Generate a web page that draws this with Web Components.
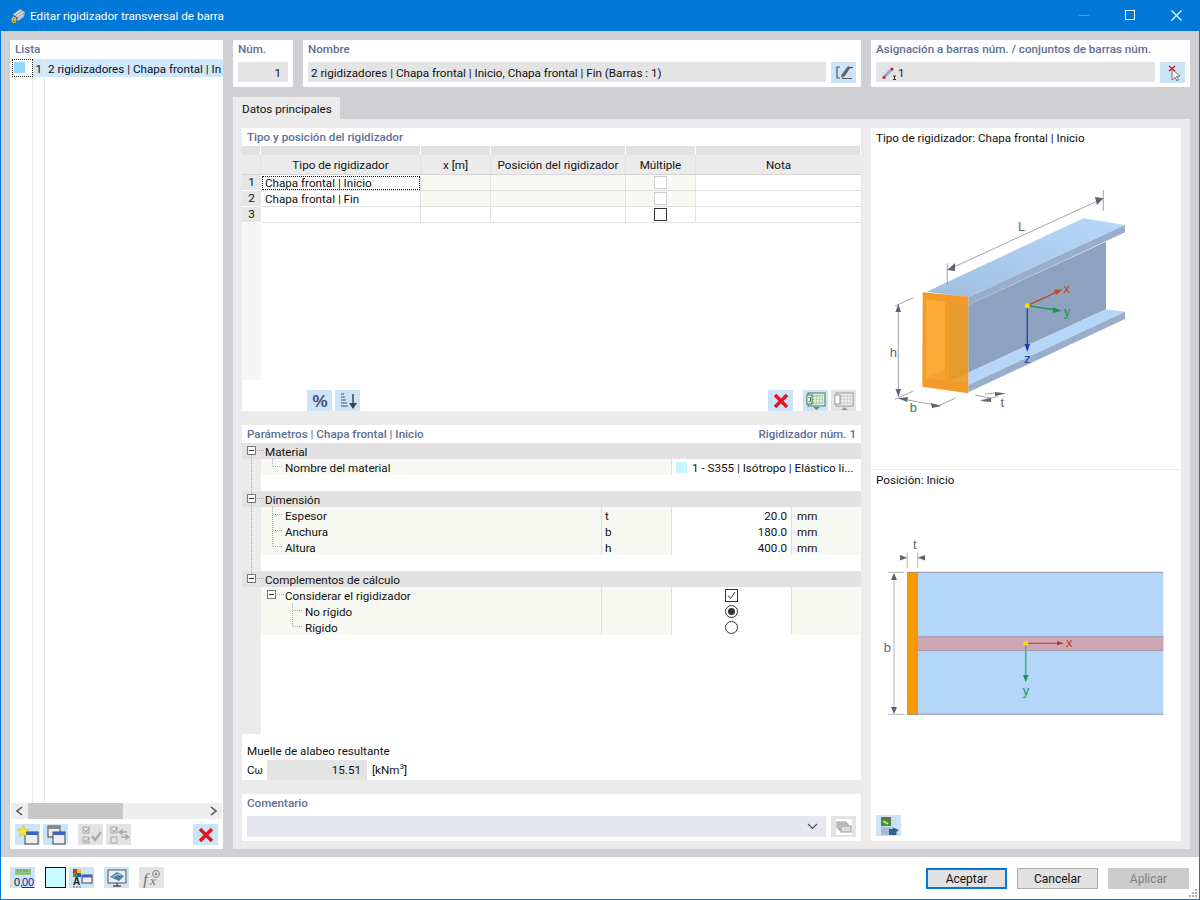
<!DOCTYPE html>
<html lang="es">
<head>
<meta charset="utf-8">
<title>Editar rigidizador transversal de barra</title>
<style>
  html, body { margin: 0; padding: 0; background: #fff; }
  body { width: 1200px; height: 900px; overflow: hidden; font: 11.65px Roboto, "Liberation Sans", sans-serif; color: #111; }
</style>
</head>
<body>
<rf-dialog>
  <rf-titlebar slot="title">Editar rigidizador transversal de barra</rf-titlebar>
  <rf-list slot="list"></rf-list>
  <rf-header slot="head"></rf-header>
  <rf-tab slot="tab">Datos principales</rf-tab>
  <rf-table slot="table"></rf-table>
  <rf-params slot="params"></rf-params>
  <rf-comment slot="comment"></rf-comment>
  <rf-preview slot="preview"></rf-preview>
  <rf-footer slot="footer"></rf-footer>
</rf-dialog>

<script>
// Iconos de la barra de herramientas (24x20)
const ICONOS = {
  editar: '<path d="M8 4H5v11h3M10 15.500h10" fill="none" stroke="#555" stroke-width="1.200"/><path d="M16 3l2.500 1.500-6 9-3 1.500 0-3.300z" fill="#666"/><path d="M17 4.500h4" stroke="#555" stroke-width="1.200"/>',
  cursor: '<path d="M11 6l0 11 3-2.500 2 3.500 1.500-1-2-3.500 3.500-.5z" fill="#eee" stroke="#777"/><path d="M8 3l6 5M14 3L8 8" stroke="#e01020" stroke-width="1.400"/>',
  porcentaje: '<text x="12" y="16" text-anchor="middle" font-family="Liberation Sans" font-weight="700" font-size="17" fill="#4a4a7a">%</text>',
  orden: '<path d="M5 3h3M5 6h4M5 9h5M5 12h6M5 15h7" stroke="#555"/><path d="M17 3v11" stroke="#444" stroke-width="1.500"/><path d="M13 12h8l-4 6z" fill="#444"/>',
  borrar: '<path d="M6 4l12 12M18 4L6 16" stroke="#e8141c" stroke-width="3.400"/>',
  excelIn: '<rect x="4" y="2" width="17" height="13" fill="#dfe8df" stroke="#4c7c55"/><rect x="8" y="4" width="11" height="9" fill="#9cc7a0"/><path d="M11 4v9M14 4v9M17 4v9M8 7h11M8 10h11" stroke="#fff" stroke-width=".8"/><rect x="3" y="4" width="5" height="9" fill="#fff" stroke="#3f7f4a"/><path d="M4.500 6.500h2v4h-2" stroke="#2b8a3e" fill="none"/><path d="M9 16h7l-3.500 3z" fill="#3aa655"/>',
  excelOut: '<rect x="4" y="2" width="17" height="13" fill="#efefef" stroke="#999"/><rect x="8" y="4" width="11" height="9" fill="#c8c8c8"/><path d="M11 4v9M14 4v9M17 4v9M8 7h11M8 10h11" stroke="#fff" stroke-width=".8"/><rect x="3" y="4" width="5" height="9" fill="#fff" stroke="#999"/><path d="M9 19h7l-3.500-3z" fill="#999"/>',
  nuevo: '<rect x="9" y="7" width="13" height="12" fill="#eee" stroke="#444"/><rect x="9" y="7" width="13" height="3" fill="#3d62c4"/><path d="M7 0l1.700 4 4.300.3-3.300 2.700 1 4.200L7 9l-3.700 2.200 1-4.200L1 4.300 5.300 4z" fill="#f6e82e" stroke="#c8b422" stroke-width=".5"/>',
  copiar: '<rect x="4" y="1" width="12" height="11" fill="#eee" stroke="#444"/><rect x="4" y="1" width="12" height="3" fill="#888"/><rect x="9" y="7" width="12" height="12" fill="#eee" stroke="#444"/><rect x="9" y="7" width="12" height="3" fill="#3d62c4"/>',
  marcar: '<rect x="4" y="2" width="6" height="6" fill="none" stroke="#aaa"/><rect x="4" y="12" width="6" height="6" fill="none" stroke="#aaa"/><path d="M5 5l2 2 3-4M5 15l2 2 3-4" fill="none" stroke="#999"/><path d="M13 11l3 4 6-8" fill="none" stroke="#aaa" stroke-width="2.400"/>',
  invertir: '<rect x="4" y="2" width="6" height="6" fill="none" stroke="#aaa"/><rect x="4" y="12" width="6" height="6" fill="none" stroke="#aaa"/><path d="M5 5l2 2 3-4" fill="none" stroke="#999"/><path d="M13 7h7M21 12h-7M12 7l3-2v4zM22 12l-3-2v4z" stroke="#aaa" stroke-width="1.300" fill="#aaa"/>',
  valores: '<rect x="4" y="1" width="16" height="6" fill="#94bf7c"/><path d="M7 1v3M10 1v3M13 1v3M16 1v3" stroke="#6f9a58"/><text x="3" y="18" font-family="Liberation Sans" font-size="11" fill="#222">0,</text><text x="11" y="18" font-family="Liberation Sans" font-size="11" fill="#23239a" text-decoration="underline">00</text>',
  color: '<rect x="3" y="1" width="4" height="4" fill="#d8342c"/><rect x="7" y="1" width="4" height="4" fill="#e6c920"/><rect x="3" y="5" width="4" height="4" fill="#2f9e44"/><rect x="7" y="5" width="4" height="4" fill="#2f55c4"/><text x="3" y="17" font-family="Liberation Sans" font-weight="700" font-size="10" fill="#222">A</text><rect x="12" y="7" width="10" height="8" fill="#eee" stroke="#445"/><rect x="12" y="7" width="10" height="2.500" fill="#3d62c4"/><path d="M3 19h8" stroke="#666" stroke-dasharray="2 1"/>',
  pantalla: '<rect x="3" y="2" width="18" height="13" fill="#e8eef4" stroke="#555"/><path d="M5 9l7-5 7 4-5 5z" fill="#4f7ea8"/><path d="M8 9l5-3 3 2" stroke="#c8dff0" fill="none"/><path d="M12 15v3M8 18h8" stroke="#555" stroke-width="1.400"/>',
  formula: '<text x="3" y="17" font-family="Liberation Serif" font-style="italic" font-size="17" fill="#777">f</text><text x="10" y="17" font-family="Liberation Serif" font-style="italic" font-size="13" fill="#777">x</text><circle cx="16" cy="6" r="3.500" fill="none" stroke="#888"/><circle cx="16" cy="6" r="1.300" fill="#888"/>',
  copias: '<rect x="4" y="2" width="16" height="16" fill="#fff"/><rect x="5" y="5" width="9" height="6" fill="#ddd" stroke="#999"/><rect x="7" y="7" width="9" height="6" fill="#ddd" stroke="#999"/><rect x="9" y="9" width="10" height="6" fill="#ddd" stroke="#999"/>',
  vista: '<rect x="4" y="1" width="10" height="9" fill="#3d8f50"/><rect x="4" y="1" width="10" height="3" fill="#7a6a3a"/><path d="M6 5l5 3" stroke="#e6e32e" stroke-width="2"/><rect x="14" y="1" width="6" height="9" fill="#cfdce6"/><rect x="4" y="11" width="10" height="8" fill="#a9bcd0"/><path d="M12 13h7v6h-7z" fill="#2f5f96"/><path d="M15 11l7 3-3 2 2 3-3-2z" fill="#2f5f96"/>'
};
const icono = n => `<svg viewBox="0 0 24 20" width="24" height="20" aria-hidden="true">${ICONOS[n]}</svg>`;

// Clase base: todos los elementos crean su shadow DOM igual
class RfBase extends HTMLElement {
  constructor() {
    super();
    this.attachShadow({mode: 'open'});
  }
  connectedCallback() {
    this.shadowRoot.innerHTML = `<style>${this.estilos()}</style>${this.plantilla()}`;
  }
  estilos() { return ':host{display:block}'; }
  plantilla() { return '<slot></slot>'; }
}

class RfBtn extends RfBase {
  estilos() {
    return `:host{display:block;width:25px;height:21px;background:#cbe4f8;flex:none}
      :host([off]){background:#e3e3e3}
      svg{display:block;margin:0 auto}
      div{height:21px;display:flex;align-items:center;justify-content:center}`;
  }
  plantilla() { return `<div>${icono(this.getAttribute('i'))}</div>`; }
}
customElements.define('rf-btn', RfBtn);

class RfCard extends RfBase {
  estilos() {
    return `:host{display:block;background:#fff;box-sizing:border-box}
      h3{margin:0;font:500 11.65px/18px Roboto,sans-serif;color:#5d6f96;padding:0 5px;height:18px;display:flex;justify-content:space-between}`;
  }
  plantilla() {
    const der = this.getAttribute('der');
    return `<h3><span>${this.getAttribute('titulo')}</span>${der ? `<span>${der}</span>` : ''}</h3><slot></slot>`;
  }
}
customElements.define('rf-card', RfCard);

class RfDialog extends RfBase {
  estilos() {
    return `:host{display:flex;flex-direction:column;width:1200px;height:900px;box-sizing:border-box;border:1px solid #0078d7;border-top:0;background:#fff}
      .cuerpo{height:826px;background:#d0d0d4;box-sizing:border-box;padding:9px 9px 8px 9px;display:grid;grid-template-columns:213px 957px;column-gap:10px}
      .der{display:flex;flex-direction:column}
      .hoja{background:#ebebeb;height:730px;box-sizing:border-box;padding:9px 9px 8px;display:grid;grid-template-columns:619px 310px;column-gap:10px}
      .izq{display:flex;flex-direction:column;gap:10px}`;
  }
  plantilla() {
    return `<slot name="title"></slot>
      <div class="cuerpo">
        <div class="lista"><slot name="list"></slot></div>
        <div class="der">
          <slot name="head"></slot>
          <slot name="tab"></slot>
          <div class="hoja">
            <div class="izq"><slot name="table"></slot><slot name="params"></slot><slot name="comment"></slot></div>
            <slot name="preview"></slot>
          </div>
        </div>
      </div>
      <slot name="footer"></slot>`;
  }
}
customElements.define('rf-dialog', RfDialog);

class RfTitlebar extends RfBase {
  estilos() {
    return `:host{display:flex;align-items:center;height:31px;background:#0078d7;color:#fff;font:11.7px Roboto,sans-serif;padding-left:9px;flex:none}
      .t{margin-left:4px;flex:1;white-space:nowrap}
      .c{display:flex}
      .c div{width:46px;height:31px;display:flex;align-items:center;justify-content:center}`;
  }
  plantilla() {
    return `<svg width="16" height="16" viewBox="0 0 16 16"><path d="M2 7l8-6 5 3-1 5-7 5z" fill="#a7b1bb"/><path d="M4 7l7-5M6 9l7-5M7 12l6-5" stroke="#eef2f5"/><path d="M2 7l5 2.500V14" fill="none" stroke="#39424c"/><text x="1" y="15" font-family="Liberation Sans" font-weight="700" font-size="9" fill="#f2c21c">6</text></svg>
      <span class="t"><slot></slot></span>
      <div class="c">
        <div><svg width="11" height="11"><path d="M0 5.500h10" stroke="#4d9fe3"/></svg></div>
        <div><svg width="11" height="11"><rect x=".5" y=".5" width="9" height="9" fill="none" stroke="#fff"/></svg></div>
        <div><svg width="11" height="11"><path d="M.5.500l10 10M10.500.500l-10 10" stroke="#fff" stroke-width="1.100"/></svg></div>
      </div>`;
  }
}
customElements.define('rf-titlebar', RfTitlebar);

class RfList extends RfBase {
  estilos() {
    return `:host{display:flex;flex-direction:column;height:809px;background:#fff}
      .fila{display:flex;height:18px;line-height:20px;margin-top:1px;white-space:nowrap}
      .foco{width:19px;height:16px;margin-left:2px;border:1px dotted #222;box-sizing:content-box;padding:0}
      .foco i{display:block;width:11px;height:11px;background:#91d8f7;margin:2px 0 0 1px}
      .sel{flex:1;display:flex;background:#cde8ff;overflow:hidden;min-width:0}
      .n{width:9px;text-align:right;flex:none}
      .x{margin-left:2px;padding-left:3px;border-left:1px solid #e4eef6;overflow:hidden}
      .vacio{flex:1;margin-left:22px;width:11px;border-left:1px solid #eaeaea;border-right:1px solid #eaeaea}
      .scroll{height:16px;margin:0 1px;background:#eee;display:flex;align-items:center}
      .scroll .fl{width:17px;display:flex;justify-content:center}
      .scroll b{width:95px;height:16px;background:#c8c8c8}
      .scroll .es{flex:1}
      .scroll svg{display:block}
      .barra{display:flex;padding:5px 5px 4px 5px;gap:3px}
      .sep{width:4px}.fin{flex:1}`;
  }
  plantilla() {
    return `<rf-card titulo="Lista" style="flex:none;height:18px"></rf-card>
      <div class="fila"><div class="foco"><i></i></div><div class="sel"><span class="n">1</span><span class="x">2 rigidizadores | Chapa frontal | In</span></div></div>
      <div class="vacio"></div>
      <div class="scroll">
        <div class="fl"><svg width="9" height="10"><path d="M7 1L2 5l5 4" fill="none" stroke="#555" stroke-width="1.600"/></svg></div>
        <b></b><span class="es"></span>
        <div class="fl"><svg width="9" height="10"><path d="M2 1l5 4-5 4" fill="none" stroke="#555" stroke-width="1.600"/></svg></div>
      </div>
      <div class="barra">
        <rf-btn i="nuevo"></rf-btn><rf-btn i="copiar"></rf-btn><span class="sep"></span>
        <rf-btn i="marcar" off></rf-btn><rf-btn i="invertir" off></rf-btn><span class="fin"></span>
        <rf-btn i="borrar"></rf-btn>
      </div>`;
  }
}
customElements.define('rf-list', RfList);

class RfHeader extends RfBase {
  estilos() {
    return `:host{display:grid;grid-template-columns:60px 558px 319px;column-gap:10px;height:47px}
      .c{display:flex;padding:4px 5px 0;gap:5px;align-items:flex-start}
      .f{background:#e4e4e4;height:20px;line-height:20px;padding:2px 3px 0;flex:1;box-sizing:border-box;white-space:nowrap;display:flex;align-items:center}
      .num{justify-content:flex-end;padding-right:7px}
      svg{margin:0 2px 0 3px}`;
  }
  plantilla() {
    return `<rf-card titulo="Núm."><div class="c"><div class="f num">1</div></div></rf-card>
      <rf-card titulo="Nombre"><div class="c"><div class="f">2 rigidizadores | Chapa frontal | Inicio, Chapa frontal | Fin (Barras : 1)</div><rf-btn i="editar"></rf-btn></div></rf-card>
      <rf-card titulo="Asignación a barras núm. / conjuntos de barras núm."><div class="c"><div class="f"><svg width="14" height="14" viewBox="0 0 14 14"><path d="M2 11L10 3" stroke="#93a7cf" stroke-width="3"/><circle cx="2" cy="11.500" r="1.500" fill="#c8202c"/><circle cx="10" cy="3" r="1.500" fill="#c8202c"/><path d="M11 10h3M12.500 10v3.500M11 13.500h3" stroke="#333"/></svg><span style="color:#30103c">1</span></div><rf-btn i="cursor"></rf-btn></div></rf-card>`;
  }
}
customElements.define('rf-header', RfHeader);

class RfTab extends RfBase {
  estilos() {
    return `:host{display:block;width:107px;height:22px;margin-top:10px;background:#ebebeb;box-sizing:border-box;padding-left:9px;line-height:24px;white-space:nowrap}`;
  }
}
customElements.define('rf-tab', RfTab);

class RfTable extends RfBase {
  estilos() {
    return `:host{display:block;height:287px}
      .t{display:grid;grid-template-columns:19px 160px 70px 135px 70px 165px;grid-auto-rows:16px}
      .t>div{box-sizing:border-box;border-right:1px solid #e2e2e2;border-bottom:1px solid #e2e2e2;line-height:17px;white-space:nowrap;padding:0 4px}
      .t>div:nth-child(6n){border-right:0}
      .a{height:9px;background:#e2e2e2;border-right:1px solid #fff!important;border-bottom:0!important}
      .h{background:#ebebeb;text-align:center;height:20px;line-height:20px!important;border-bottom:1px solid #d6d6d6!important}
      .n{background:#e6e6e6;text-align:center;border-right:0!important;border-bottom:1px solid #fff!important;padding:0!important;line-height:15px!important}
      .g{background:#f7f8f2}
      .foco{outline:1px dotted #111;outline-offset:-2px}
      .ck{display:flex;align-items:center;justify-content:center}
      .ck i{width:11px;height:11px;border:1px solid #d0d0d0;display:block;background:#fff}
      .ck.on i{border-color:#333}
      .resto{display:flex;height:157px}
      .resto i{width:19px;background:#f5f5f5}
      .barra{display:flex;padding-top:10px;padding-left:65px;gap:3px}
      .fin{flex:1}`;
  }
  plantilla() {
    const cabA = '<div class="a"></div>'.repeat(6);
    const cab = ['', 'Tipo de rigidizador', 'x [m]', 'Posición del rigidizador', 'Múltiple', 'Nota'].map(t => `<div class="h">${t}</div>`).join('');
    const filas = [['Chapa frontal | Inicio', 'foco', 'g', ''], ['Chapa frontal | Fin', '', 'g', ''], ['', '', '', 'on']].map((f, i) =>
      `<div class="n">${i + 1}</div><div class="${f[1]}">${f[0]}</div><div class="${f[2]}"></div><div class="${f[2]}"></div><div class="ck ${f[2]} ${f[3]}"><i></i></div><div></div>`).join('');
    return `<rf-card titulo="Tipo y posición del rigidizador">
      <div class="t" style="grid-template-rows:9px 20px repeat(3,16px)">${cabA}${cab}${filas}</div>
      <div class="resto"><i></i></div>
      <div class="barra">
        <rf-btn i="porcentaje"></rf-btn><rf-btn i="orden"></rf-btn><span class="fin"></span>
        <rf-btn i="borrar"></rf-btn><span style="width:4px"></span><rf-btn i="excelIn"></rf-btn><rf-btn i="excelOut" off></rf-btn><span style="width:2px"></span>
      </div></rf-card>`;
  }
}
customElements.define('rf-table', RfTable);

// Líneas punteadas del árbol, cada fila dibuja su propio margen
const LP = 'stroke="#a8a8a8" stroke-dasharray="1 1"';
const menos = x => `<rect x="${x + .5}" y="3.500" width="8" height="8" fill="#fff" stroke="#777"/><path d="M${x + 2} 7.500h5" stroke="#333"/>`;
const margen = (ancho, gris, contenido) =>
  `<svg class="m" width="${ancho}" height="16">${gris ? '<rect width="19" height="16" fill="#ebebeb"/>' : ''}${contenido}</svg>`;

class RfParams extends RfBase {
  estilos() {
    return `:host{display:block;height:359px}
      .t{display:grid;grid-template-columns:360px 70px 120px 69px;grid-auto-rows:16px}
      .t>div{line-height:16px;white-space:nowrap;display:flex;align-items:center;box-sizing:border-box;overflow:hidden}
      .m{flex:none;display:block}
      .tx{position:relative;top:1px}
      .cab{grid-column:1 / 5;background:#e2e2e2}
      .vac{grid-column:1 / 5;background:#fff}
      .g{background:#f7f8f2}
      .sl{border-right:1px solid #dedede}
      .val{justify-content:flex-end;padding-right:4px;background:#fff;border-right:1px solid #dedede}
      .sym{padding-left:3px}
      .un{padding-left:5px}
      .cen{justify-content:center;background:#fff;border-right:1px solid #dedede}
      .mat{padding-left:4px;background:#fff;grid-column:3 / 5}
      .mat i{width:11px;height:11px;background:#c4f6fb;margin-right:5px;flex:none}
      .resto{height:99px;width:19px;background:#ebebeb}
      .muelle{padding:9px 5px 0}
      .muelle p{margin:0;line-height:16px}
      .cw{display:flex;align-items:center;height:20px;margin-top:1px}
      .cw em{font-style:normal;width:20px}
      .cw em span{font-size:10px}
      .cw b{font-weight:400;width:100px;height:20px;line-height:20px;background:#e4e4e4;text-align:right;padding-right:6px;box-sizing:border-box;margin-right:5px}
      sup{font-size:8px;line-height:0}`;
  }
  plantilla() {
    const cab = (txt, arriba, abajo) => `<div class="cab">${margen(23, false,
      menos(5) + `<path d="M15 7.500h7" ${LP}/>` + (arriba ? `<path d="M9.500 0v3" ${LP}/>` : '') + (abajo ? `<path d="M9.500 12v4" ${LP}/>` : ''))}<span class="tx">${txt}</span></div>`;
    const hijo = (txt, sym, val, un, ult) => `<div class="g sl">${margen(43, true,
      `<path d="M9.500 0v16" ${LP}/><path d="M30.500 0v${ult ? 8 : 16}M31 7.500h10" ${LP}/>`)}<span class="tx">${txt}</span></div><div class="g sl sym"><span class="tx">${sym}</span></div><div class="val"><span class="tx">${val}</span></div><div class="g un"><span class="tx">${un}</span></div>`;
    const vacio = () => `<div class="vac">${margen(19, true, `<path d="M9.500 0v16" ${LP}/>`)}</div>`;
    return `<rf-card titulo="Parámetros | Chapa frontal | Inicio" der="Rigidizador núm. 1">
      <div class="t">
        ${cab('Material', false, true)}
        <div class="g sl" style="grid-column:1 / 3">${margen(43, true, `<path d="M9.500 0v16" ${LP}/><path d="M30.500 0v8M31 7.500h10" ${LP}/>`)}<span class="tx">Nombre del material</span></div><div class="mat"><i></i><span class="tx">1 - S355 | Isótropo | Elástico li...</span></div>
        ${vacio()}
        ${cab('Dimensión', true, true)}
        ${hijo('Espesor', 't', '20.0', 'mm')}
        ${hijo('Anchura', 'b', '180.0', 'mm')}
        ${hijo('Altura', 'h', '400.0', 'mm', true)}
        ${vacio()}
        ${cab('Complementos de cálculo', true, false)}
        <div class="g sl">${margen(43, true, menos(25) + `<path d="M35 7.500h7" ${LP}/>`)}<span class="tx">Considerar el rigidizador</span></div><div class="g sl"></div>
        <div class="cen"><svg width="13" height="13"><rect x=".5" y=".5" width="12" height="12" fill="#fff" stroke="#333"/><path d="M3 6.500l2.500 3L10 3" fill="none" stroke="#333"/></svg></div><div class="g"></div>
        <div class="g sl">${margen(63, true, `<path d="M50.500 0v16M51 7.500h10" ${LP}/>`)}<span class="tx">No rígido</span></div><div class="g sl"></div>
        <div class="cen"><svg width="13" height="13"><circle cx="6.500" cy="6.500" r="6" fill="#fff" stroke="#333"/><circle cx="6.500" cy="6.500" r="3.500" fill="#333"/></svg></div><div class="g"></div>
        <div class="g sl">${margen(63, true, `<path d="M50.500 0v8M51 7.500h10" ${LP}/>`)}<span class="tx">Rígido</span></div><div class="g sl"></div>
        <div class="cen"><svg width="13" height="13"><circle cx="6.500" cy="6.500" r="6" fill="#fff" stroke="#333"/></svg></div><div class="g"></div>
      </div>
      <div class="resto"></div>
      <div class="muelle"><p>Muelle de alabeo resultante</p>
        <div class="cw"><em>C<span>ω</span></em><b>15.51</b><span>[kNm<sup>3</sup>]</span></div>
      </div></rf-card>`;
  }
}
customElements.define('rf-params', RfParams);

class RfComment extends RfBase {
  estilos() {
    return `:host{display:block;height:47px}
      .c{display:flex;gap:5px;padding:4px 5px 0}
      .f{flex:1;height:21px;background:#e6e6f0;display:flex;align-items:center;justify-content:flex-end;padding-right:8px}`;
  }
  plantilla() {
    return `<rf-card titulo="Comentario" style="height:47px"><div class="c"><div class="f"><svg width="11" height="7"><path d="M1 1l4.500 4.500L10 1" fill="none" stroke="#555" stroke-width="1.200"/></svg></div><rf-btn i="copias" off></rf-btn></div></rf-card>`;
  }
}
customElements.define('rf-comment', RfComment);

class RfPreview extends RfBase {
  estilos() {
    return `:host{display:flex;flex-direction:column;background:#fff;height:713px}
      p{margin:0;padding:0 5px;height:19px;line-height:20px;white-space:nowrap}
      .a{height:341px;border-bottom:1px solid #ececec;box-sizing:content-box}
      .b{flex:1;display:flex;flex-direction:column}
      svg.d{display:block}
      text{font-family:"Liberation Sans",sans-serif}
      .pie{padding:0 5px 5px}`;
  }
  plantilla() {
    const gris = '#5f6070';
    return `<div class="a"><p>Tipo de rigidizador: Chapa frontal | Inicio</p>
      <svg class="d" width="310" height="322" viewBox="871 147 310 322">
        <defs><linearGradient id="ala" x1="0" y1="1" x2="1" y2="0"><stop offset="0" stop-color="#9fbfe0"/><stop offset="1" stop-color="#b6d8fa"/></linearGradient></defs>
        <polygon points="926.700,291.700 1083.300,218.300 1125,225 968.300,297.300" fill="url(#ala)"/>
        <polygon points="968.300,297.300 1125,225 1125,232.300 968.300,305" fill="#9aaecb"/>
        <polygon points="968.300,305 1106,241.700 1106,309.300 968.300,372.700" fill="#8ca2bf"/>
        <polygon points="968.300,372.700 1106,309.300 1125,311.700 968.300,385" fill="#b5d6f8"/>
        <polygon points="968.300,385 1125,311.700 1125,319 968.300,392.300" fill="#9aaecb"/>
        <polygon points="922.700,292.300 968.300,296.700 968.300,393.300 922.300,386.700" fill="#f39a28"/>
        <polygon points="926,299.300 945,301.700 945,380 926,378.300" fill="#fdab36"/>
        <polygon points="949,302.700 967.700,305 967.700,383.300 949,381" fill="#e49a2d"/>
        <polygon points="926,378.300 945,369 945,380" fill="#f3a236"/>
        <polygon points="949,381 967.700,373 967.700,383.300" fill="#eda335"/>
        <g stroke="#8c8c98" fill="none" stroke-width=".8">
          <path d="M947.300 263.300V284M1103.300 190V211M947.300 270L1103.300 198.300"/>
          <path d="M898.300 304V396.700M895 306l18.300-8.300M895 399.300l18.300-8.300M898.300 398.300l42.400 7.700M936.700 406.700l18.300-8.400"/>
          <path d="M975 395l16.700 3.300M981 400.500l16.700-4M985 394l10-1"/>
        </g>
        <g fill="${gris}">
          <polygon points="947.300,270 955,263 955,271"/><polygon points="1103.300,198.300 1095,197 1097,205"/>
          <polygon points="898.300,304 895.500,312 901,312"/><polygon points="898.300,396.700 895.500,389 901,389"/>
          <polygon points="898.300,398.300 908,397 907,402"/><polygon points="940.700,406 931,403 932,408"/>
          <polygon points="1006,393.500 995,392 995,396"/><polygon points="980,401 991,398 991,402"/>
        </g>
        <path d="M1027.300 305.700L1058 291.500" stroke="#c0451e" stroke-width="1.300"/><polygon points="1062.700,289.300 1054,290 1056,295" fill="#c0451e"/>
        <path d="M1027.300 305.700L1056 310" stroke="#1a9850" stroke-width="1.300"/><polygon points="1061.700,310.700 1053,307 1053,313" fill="#1a9850"/>
        <path d="M1027.300 305.700V346" stroke="#1c3fa8" stroke-width="1.300"/><polygon points="1027.300,352 1024.500,344 1030,344" fill="#1c3fa8"/>
        <circle cx="1027.300" cy="305.700" r="2.500" fill="#f6dc00"/>
        <g font-size="13" text-anchor="middle">
          <text x="1021.700" y="231" fill="#666">L</text>
          <text x="893.300" y="357" fill="#666">h</text>
          <text x="913.300" y="412" fill="#666">b</text>
          <text x="1002.300" y="407" fill="#666">t</text>
          <text x="1066.700" y="293" fill="#c0451e">x</text>
          <text x="1067" y="316" fill="#1a9850">y</text>
          <text x="1027.300" y="363" fill="#1c3fa8">z</text>
        </g>
      </svg></div>
      <div class="b"><p>Posición: Inicio</p>
        <svg class="d" width="310" height="311" viewBox="871 489 310 311" style="flex:none">
          <rect x="917.700" y="572.300" width="245.600" height="142" fill="#b3d6f9"/>
          <path d="M907.300 572.300H1163.300M907.300 714.300H1163.300" stroke="#8a8a96" stroke-width=".9"/>
          <path d="M917.700 636.700h245.600v13.700h-245.600z" fill="#cfa6b4"/>
          <path d="M917.700 636.700h245.600M917.700 650.400h245.600" stroke="#8f8a96" stroke-width=".7"/>
          <rect x="907.300" y="572.300" width="10.400" height="142" fill="#f89a06" stroke="#8a8a80" stroke-width=".5"/>
          <g stroke="#a8a8b2" stroke-width=".9" fill="none"><path d="M894 574V713M888.300 572.300H904M888.300 714.300H904M907.300 552.700V567.700M917.700 552.700V567.700"/></g>
          <g fill="${gris}">
            <polygon points="894,573 891,580 897,580"/><polygon points="894,714 891,707 897,707"/>
            <polygon points="907.300,557.700 900,555 900,560.500"/><polygon points="917.700,557.700 925,555 925,560.500"/>
          </g>
          <path d="M1025.700 643.300H1060" stroke="#c0391e"/><polygon points="1064,643.300 1057,641 1057,645.500" fill="#c0391e"/>
          <path d="M1025.700 643.300V677" stroke="#3ab27a" stroke-width="1.500"/><polygon points="1025.700,682 1023,675 1028.500,675" fill="#17944f"/>
          <circle cx="1025.700" cy="643.300" r="2.500" fill="#f6dc00"/>
          <g font-size="13" text-anchor="middle">
            <text x="914.700" y="549" fill="#666">t</text>
            <text x="887.300" y="652" fill="#666">b</text>
            <text x="1069.300" y="647" fill="#c0391e">x</text>
            <text x="1026" y="695" fill="#17944f">y</text>
          </g>
        </svg>
        <span style="flex:1"></span>
        <div class="pie"><rf-btn i="vista"></rf-btn></div>
      </div>`;
  }
}
customElements.define('rf-preview', RfPreview);

class RfFooter extends RfBase {
  estilos() {
    return `:host{display:flex;align-items:center;height:42px;padding:0 10px 1px 9px;box-sizing:border-box;background:#fff;position:relative}
      .sw{width:21px;height:21px;box-sizing:border-box;background:#c8fbff;border:1px solid #111;flex:none;margin-left:10px;margin-right:3px}
      .s{width:10px}.fin{flex:1}
      button{width:81px;height:21px;font:12px Roboto,sans-serif;color:#111;background:#e1e1e1;border:1px solid #adadad;box-sizing:border-box;margin:2px 0 0 10px;padding:1px 0 0}
      .pri{border:2px solid #0078d7}
      .no{background:#ccc;border-color:#ccc;color:#7f7f7f}
      .grip{position:absolute;right:1px;bottom:1px}`;
  }
  plantilla() {
    return `<rf-btn i="valores"></rf-btn><div class="sw"></div><rf-btn i="color"></rf-btn><span class="s"></span><rf-btn i="pantalla"></rf-btn><span class="s"></span><rf-btn i="formula" off></rf-btn>
      <span class="fin"></span>
      <button class="pri">Aceptar</button><button>Cancelar</button><button class="no">Aplicar</button>
      <svg class="grip" width="10" height="10"><g fill="#b0b0b0"><rect x="7" y="1" width="2" height="2"/><rect x="4" y="4" width="2" height="2"/><rect x="7" y="4" width="2" height="2"/><rect x="1" y="7" width="2" height="2"/><rect x="4" y="7" width="2" height="2"/><rect x="7" y="7" width="2" height="2"/></g></svg>`;
  }
}
customElements.define('rf-footer', RfFooter);
</script>
</body>
</html>
